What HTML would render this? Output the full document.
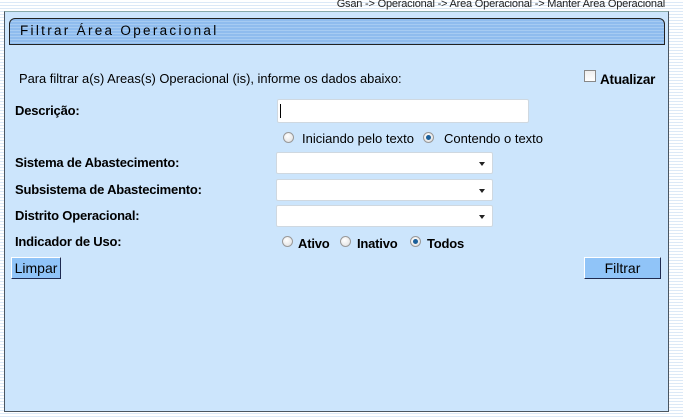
<!DOCTYPE html>
<html><head><meta charset="utf-8"><style>
*{margin:0;padding:0;box-sizing:border-box}
body{width:683px;height:418px;overflow:hidden;position:relative;font-family:"Liberation Sans",Arial,sans-serif;color:#000;
background:repeating-linear-gradient(to bottom,#fff 0,#fff 2px,#dce9f7 2px,#dce9f7 3px);}
.a{position:absolute;white-space:nowrap}
.panel{position:absolute;left:4px;top:11px;width:665px;height:401px;background:#cce5fc;border:1px solid #4a5560;border-top-color:#8aa;}
.hdr{position:absolute;left:9px;top:18px;width:656px;height:27px;border:1px solid #222;border-radius:6px 6px 0 0;
background:repeating-linear-gradient(to bottom,#8fbcee 0,#8fbcee 2px,#a6cbf2 2px,#a6cbf2 3px);}
.lbl{font-weight:bold;font-size:13px;letter-spacing:-0.2px}
.sel,.inp{position:absolute;background:#fff;border:1px solid #cfd8e0;border-radius:2px}
.sel::after{content:"";position:absolute;right:7px;top:9px;border-left:3.5px solid transparent;border-right:3.5px solid transparent;border-top:4px solid #222}
.r{position:absolute;width:11px;height:11px;border-radius:50%;border:1px solid #999;background:radial-gradient(circle at 40% 35%,#fff,#ddd)}
.r.on::after{content:"";position:absolute;left:2px;top:2px;width:5px;height:5px;border-radius:50%;background:#1a5f9a}
.btn{position:absolute;height:22px;background:#90c4f8;border:1px solid #fff;border-right-color:#1e2a50;border-bottom-color:#1e2a50;font-size:14px;text-align:center;line-height:20px}
</style></head><body>
<div class="a" style="right:18px;top:-2px;font-size:11px;color:#222;letter-spacing:-0.2px">Gsan -&gt; Operacional -&gt; Area Operacional -&gt; Manter Area Operacional</div>
<div class="panel"></div>
<div class="hdr"></div>
<div class="a" style="left:20px;top:23px;font-size:13.5px;letter-spacing:2.3px">Filtrar Área Operacional</div>
<div class="a" style="left:19px;top:71px;font-size:12.9px">Para filtrar a(s) Areas(s) Operacional (is), informe os dados abaixo:</div>
<div class="a" style="left:584px;top:70px;width:12px;height:12px;border:1px solid #888;background:linear-gradient(#eee,#fff)"></div>
<div class="a lbl" style="left:600px;top:72px;font-size:13.5px">Atualizar</div>
<div class="a lbl" style="left:15px;top:103px">Descrição:</div>
<div class="inp" style="left:277px;top:99px;width:252px;height:24px"></div>
<div class="a" style="left:280px;top:104px;width:1px;height:14px;background:#000"></div>
<div class="r" style="left:283px;top:132px"></div>
<div class="a" style="left:302px;top:131px;font-size:13px">Iniciando pelo texto</div>
<div class="r on" style="left:423px;top:132px"></div>
<div class="a" style="left:444px;top:131px;font-size:13px">Contendo o texto</div>
<div class="a lbl" style="left:15px;top:155px">Sistema de Abastecimento:</div>
<div class="sel" style="left:276px;top:152px;width:217px;height:22px"></div>
<div class="a lbl" style="left:15px;top:182px">Subsistema de Abastecimento:</div>
<div class="sel" style="left:276px;top:179px;width:217px;height:22px"></div>
<div class="a lbl" style="left:15px;top:208px">Distrito Operacional:</div>
<div class="sel" style="left:276px;top:205px;width:217px;height:22px"></div>
<div class="a lbl" style="left:15px;top:234px">Indicador de Uso:</div>
<div class="r" style="left:282px;top:236px"></div>
<div class="a lbl" style="left:298px;top:236px">Ativo</div>
<div class="r" style="left:340px;top:236px"></div>
<div class="a lbl" style="left:357px;top:236px">Inativo</div>
<div class="r on" style="left:410px;top:236px"></div>
<div class="a lbl" style="left:427px;top:236px">Todos</div>
<div class="btn" style="left:11px;top:257px;width:50px">Limpar</div>
<div class="btn" style="left:584px;top:257px;width:77px">Filtrar</div>
</body></html>
